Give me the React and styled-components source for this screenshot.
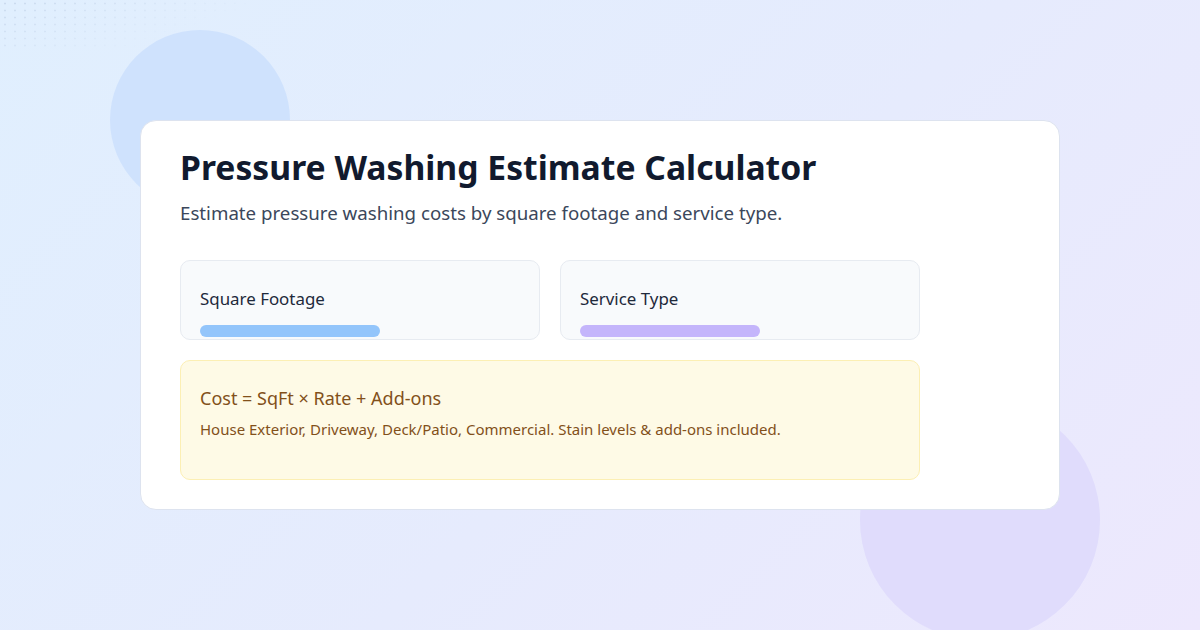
import React from "react";
import styled, { createGlobalStyle } from "styled-components";

const Global = createGlobalStyle`
  html, body { margin: 0; padding: 0; }
  body { font-family: "Noto Sans", "Open Sans", sans-serif; }
  * { box-sizing: border-box; }
`;

const Page = styled.div`
  position: relative;
  width: 1200px;
  height: 630px;
  overflow: hidden;
  background: linear-gradient(135deg, #e0effe 0%, #e6ebfd 55%, #ede8fd 100%);
  display: flex;
  align-items: flex-start;
  justify-content: center;
  padding-top: 120px;
`;

const Blob = styled.div`
  position: absolute;
  left: ${(p) => p.$x - p.$r}px;
  top: ${(p) => p.$y - p.$r}px;
  width: ${(p) => p.$r * 2}px;
  height: ${(p) => p.$r * 2}px;
  border-radius: 50%;
  background: ${(p) => p.$color};
`;

const Dots = styled.div`
  position: absolute;
  left: 0;
  top: 0;
  width: 250px;
  height: 50px;
  background-image: radial-gradient(circle, rgba(148, 170, 200, 0.3) 0.8px, transparent 1.2px);
  background-size: 10px 7px;
  -webkit-mask-image: linear-gradient(160deg, #000 0%, transparent 70%);
  mask-image: linear-gradient(160deg, #000 0%, transparent 70%);
`;

const Card = styled.main`
  position: relative;
  width: 920px;
  height: 390px;
  background: #ffffff;
  border: 1px solid #dde3ef;
  border-radius: 16px;
  padding: 26px 39px 29px;
`;

const Title = styled.h1`
  margin: 0;
  font-size: 33.7px;
  line-height: 1.2;
  font-weight: 700;
  color: #111a2e;
  letter-spacing: 0;
`;

const Subtitle = styled.p`
  margin: 12px 0 0;
  font-size: 18.7px;
  line-height: 28px;
  color: #3b475b;
`;

const Content = styled.div`
  width: 740px;
  margin-top: 33px;
  display: flex;
  flex-direction: column;
  gap: 20px;
`;

const Fields = styled.div`
  display: grid;
  grid-template-columns: 1fr 1fr;
  gap: 20px;
`;

const Field = styled.div`
  height: 80px;
  background: #f8fafc;
  border: 1px solid #e7ebf1;
  border-radius: 10px;
  padding: 25px 19px 0;
  display: flex;
  flex-direction: column;
  gap: 14px;
`;

const Label = styled.div`
  font-size: 16.9px;
  line-height: 25px;
  color: #1e293b;
`;

const Bar = styled.div`
  width: 180px;
  height: 12px;
  border-radius: 6px;
  background: ${(p) => p.$color};
`;

const Formula = styled.div`
  min-height: 120px;
  background: #fefae6;
  border: 1px solid #fcefb4;
  border-radius: 10px;
  padding: 24.5px 19px 20px;
  display: flex;
  flex-direction: column;
  gap: 8px;
`;

const Equation = styled.div`
  font-size: 18px;
  line-height: 25px;
  color: #82501a;
`;

const Note = styled.div`
  font-size: 15px;
  line-height: 21px;
  color: #82501a;
`;

export default function App() {
  return (
    <>
      <Global />
      <Page>
        <Dots />
        <Blob $x={200} $y={120} $r={90} $color="#cfe2fd" />
        <Blob $x={980} $y={520} $r={120} $color="#e0dcfc" />
        <Card>
          <Title>Pressure Washing Estimate Calculator</Title>
          <Subtitle>Estimate pressure washing costs by square footage and service type.</Subtitle>
          <Content>
            <Fields>
              <Field>
                <Label>Square Footage</Label>
                <Bar $color="#93c5fb" />
              </Field>
              <Field>
                <Label>Service Type</Label>
                <Bar $color="#c4b5fb" />
              </Field>
            </Fields>
            <Formula>
              <Equation>Cost = SqFt × Rate + Add-ons</Equation>
              <Note>House Exterior, Driveway, Deck/Patio, Commercial. Stain levels &amp; add-ons included.</Note>
            </Formula>
          </Content>
        </Card>
      </Page>
    </>
  );
}
